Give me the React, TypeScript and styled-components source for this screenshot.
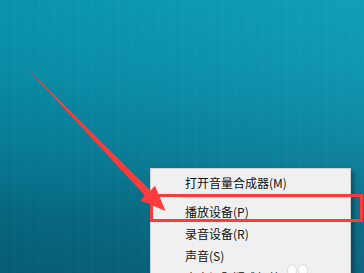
import React from "react";
import styled, { createGlobalStyle } from "styled-components";

const GlobalStyle = createGlobalStyle`
  html, body {
    margin: 0;
    padding: 0;
    overflow: hidden;
  }
`;

const items = [
  { label: "打开音量合成器(M)", sep: true },
  { label: "播放设备(P)" },
  { label: "录音设备(R)" },
  { label: "声音(S)" },
  { label: "声音问题疑难解答(T)" },
];

const App: React.FC = () => {
  return (
    <>
      <GlobalStyle />
      <Desktop>
        <Streaks />
        <Menu>
          {items.map((it) => (
            <React.Fragment key={it.label}>
              <Item>{it.label}</Item>
              {it.sep && <Separator />}
            </React.Fragment>
          ))}
        </Menu>
        <Highlight />
        <Paw>
          <span />
          <span />
        </Paw>
        <Arrow width="364" height="273" viewBox="0 0 364 273">
          <polygon
            points="21.6,62.6 22.4,63.4 150.4,190.4 155,185.8 165.5,211 140.2,200.2 145,195.6"
            fill="#fc3b3b"
          />
        </Arrow>
      </Desktop>
    </>
  );
};

export default App;

const Desktop = styled.div`
  position: relative;
  width: 364px;
  height: 273px;
  overflow: hidden;
  box-sizing: border-box;
  padding: 168px 0 0 150px;
  background: linear-gradient(
    180deg,
    #0a9cb6 0%,
    #0994ae 25%,
    #08819c 55%,
    #076b86 80%,
    #06617a 100%
  );
  font-family: "Noto Sans CJK SC", "Microsoft YaHei", sans-serif;
`;

const Streaks = styled.div`
  position: absolute;
  inset: 0;
  background: repeating-linear-gradient(
      90deg,
      rgba(255, 255, 255, 0.012) 0px,
      rgba(255, 255, 255, 0) 4px,
      rgba(0, 0, 0, 0.01) 9px,
      rgba(255, 255, 255, 0) 13px
    ),
    linear-gradient(90deg, rgba(0, 0, 0, 0.05) 0%, rgba(255, 255, 255, 0.03) 100%);
  pointer-events: none;
`;

const Menu = styled.div`
  position: relative;
  width: 201px;
  box-sizing: border-box;
  padding: 3px 0;
  background: #f0f0f0;
  border: 1px solid #cfd2d4;
  box-shadow: 3px 3px 4px rgba(0, 0, 0, 0.35);
`;

const Item = styled.div`
  height: 22px;
  line-height: 22px;
  padding-left: 34px;
  font-size: 12px;
  color: #111;
  white-space: nowrap;
`;

const Separator = styled.div`
  height: 1px;
  margin: 3px 2px 3px 30px;
  background: #d7d7d7;
`;

const Highlight = styled.div`
  position: absolute;
  left: 150px;
  top: 194px;
  width: 213px;
  height: 28px;
  box-sizing: border-box;
  border: 3px solid #fc3b3b;
`;

const Paw = styled.div`
  position: absolute;
  left: 287px;
  top: 264px;
  display: flex;
  gap: 1px;

  span {
    width: 8px;
    height: 11px;
    border-radius: 50%;
    background: rgba(255, 255, 255, 0.85);
    border: 1px solid rgba(200, 200, 200, 0.6);
  }
`;

const Arrow = styled.svg`
  position: absolute;
  left: 0;
  top: 0;
  pointer-events: none;
`;
